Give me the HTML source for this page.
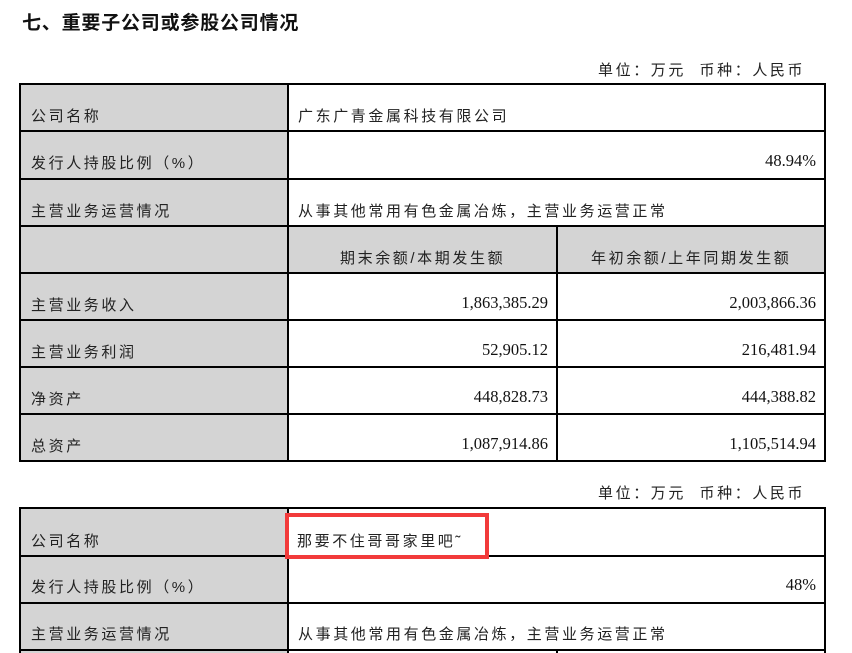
<!DOCTYPE html>
<html><head><meta charset="utf-8"><style>
body{margin:0;width:852px;height:653px;background:#fff;overflow:hidden;position:relative;font-family:"Liberation Serif","Noto Serif CJK SC","Noto Sans CJK SC",serif;color:#111}
.t{position:absolute;white-space:nowrap}
.cjk{font-family:"Liberation Sans","Noto Sans CJK SC",sans-serif;font-size:15px;letter-spacing:2.6px;color:#222}
.num{font-family:"Liberation Serif",serif;font-size:16.5px}
.g{position:absolute;background:#d4d4d4}
.h{position:absolute;height:2px;background:#000}
.v{position:absolute;width:2px;background:#000}
</style></head><body>
<div class="t" style="left:22px;top:8px;font-family:'Liberation Sans','Noto Sans CJK SC',sans-serif;font-size:19px;font-weight:600;letter-spacing:0.8px">七、重要子公司或参股公司情况</div>
<div class="t cjk" style="left:598px;top:59px">单位：万元&nbsp;&nbsp;币种：人民币</div>

<div class="g" style="left:20px;top:84px;width:268px;height:376px"></div>
<div class="g" style="left:288px;top:225px;width:536px;height:48px"></div>
<div class="h" style="left:20px;top:83px;width:806px"></div>
<div class="h" style="left:20px;top:130px;width:806px"></div>
<div class="h" style="left:20px;top:178px;width:806px"></div>
<div class="h" style="left:20px;top:225px;width:806px"></div>
<div class="h" style="left:20px;top:272px;width:806px"></div>
<div class="h" style="left:20px;top:319px;width:806px"></div>
<div class="h" style="left:20px;top:366px;width:806px"></div>
<div class="h" style="left:20px;top:413px;width:806px"></div>
<div class="h" style="left:20px;top:460px;width:806px"></div>
<div class="v" style="left:19px;top:83px;height:379px"></div>
<div class="v" style="left:287px;top:83px;height:379px"></div>
<div class="v" style="left:556px;top:225px;height:237px"></div>
<div class="v" style="left:824px;top:83px;height:379px"></div>

<div class="t cjk" style="left:31px;top:105px">公司名称</div>
<div class="t cjk" style="left:298px;top:105px">广东广青金属科技有限公司</div>
<div class="t cjk" style="left:31px;top:152px">发行人持股比例（%）</div>
<div class="t num" style="right:36px;top:151px">48.94%</div>
<div class="t cjk" style="left:31px;top:200px">主营业务运营情况</div>
<div class="t cjk" style="left:298px;top:200px">从事其他常用有色金属冶炼，主营业务运营正常</div>
<div class="t cjk" style="left:340px;top:247px">期末余额/本期发生额</div>
<div class="t cjk" style="left:591px;top:247px">年初余额/上年同期发生额</div>
<div class="t cjk" style="left:31px;top:294px">主营业务收入</div>
<div class="t num" style="right:304px;top:293px">1,863,385.29</div>
<div class="t num" style="right:36px;top:293px">2,003,866.36</div>
<div class="t cjk" style="left:31px;top:341px">主营业务利润</div>
<div class="t num" style="right:304px;top:340px">52,905.12</div>
<div class="t num" style="right:36px;top:340px">216,481.94</div>
<div class="t cjk" style="left:31px;top:388px">净资产</div>
<div class="t num" style="right:304px;top:387px">448,828.73</div>
<div class="t num" style="right:36px;top:387px">444,388.82</div>
<div class="t cjk" style="left:31px;top:435px">总资产</div>
<div class="t num" style="right:304px;top:434px">1,087,914.86</div>
<div class="t num" style="right:36px;top:434px">1,105,514.94</div>

<div class="t cjk" style="left:598px;top:482px">单位：万元&nbsp;&nbsp;币种：人民币</div>
<div class="g" style="left:20px;top:508px;width:268px;height:145px"></div>
<div class="h" style="left:20px;top:507px;width:806px"></div>
<div class="h" style="left:20px;top:555px;width:806px"></div>
<div class="h" style="left:20px;top:602px;width:806px"></div>
<div class="h" style="left:20px;top:649px;width:806px"></div>
<div class="v" style="left:19px;top:507px;height:146px"></div>
<div class="v" style="left:287px;top:507px;height:146px"></div>
<div class="v" style="left:556px;top:649px;height:4px"></div>
<div class="v" style="left:824px;top:507px;height:146px"></div>
<div style="position:absolute;left:285px;top:513px;width:196px;height:38px;border:4px solid #f23a3a;background:#fff"></div>
<div class="t cjk" style="left:31px;top:530px">公司名称</div>
<div class="t cjk" style="left:297px;top:530px">那要不住哥哥家里吧˜</div>
<div class="t cjk" style="left:31px;top:576px">发行人持股比例（%）</div>
<div class="t num" style="right:36px;top:575px">48%</div>
<div class="t cjk" style="left:31px;top:623px">主营业务运营情况</div>
<div class="t cjk" style="left:298px;top:623px">从事其他常用有色金属冶炼，主营业务运营正常</div>
</body></html>
